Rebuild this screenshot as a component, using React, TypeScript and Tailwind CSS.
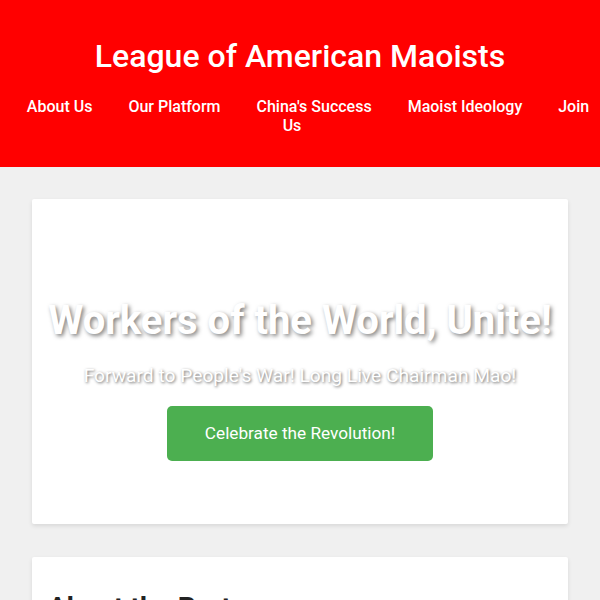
import React from "react";

const NAV_ITEMS = ["About Us", "Our Platform", "China's Success", "Maoist Ideology", "Join Us"];

const App: React.FC = () => {
  return (
    <div
      className="min-h-screen bg-[#f0f0f0] text-[#333]"
      style={{ fontFamily: "Roboto, 'Liberation Sans', sans-serif" }}
    >
      {/* Header */}
      <header className="bg-[#ff0000] text-white pt-[20px] pb-[32px] text-center">
        <h1 className="text-[32px] font-medium leading-normal mt-[12px] mb-[17px]">
          League of American Maoists
        </h1>
        <nav className="text-[16px] font-medium leading-[19px]">
          {NAV_ITEMS.map((item, i) => (
            <React.Fragment key={item}>
              <a href="#" className="mx-4 text-white">
                {item}
              </a>
              {i < NAV_ITEMS.length - 1 ? " " : null}
            </React.Fragment>
          ))}
        </nav>
      </header>

      <main className="px-8 pt-8 pb-8 space-y-[33px]">
        {/* Hero */}
        <section className="bg-white shadow-[0_2px_4px_rgba(0,0,0,0.1)] rounded-[2px] h-[325px] flex flex-col items-center text-center px-2 pt-[99px]">
          <h2 className="text-[40px] font-bold leading-[46px] text-white whitespace-nowrap [text-shadow:2px_2px_4px_rgba(0,0,0,0.5)]">
            Workers of the World, Unite!
          </h2>
          <p className="text-[19.2px] leading-[22px] text-white whitespace-nowrap [text-shadow:1px_1px_3px_rgba(0,0,0,0.6)] mt-[21px]">
            Forward to People's War! Long Live Chairman Mao!
          </p>
          <button className="mt-[19px] bg-[#4caf50] text-white text-[17.2px] whitespace-nowrap px-[38px] h-[55px] rounded-[5px]">
            Celebrate the Revolution!
          </button>
        </section>

        {/* About */}
        <section className="bg-white shadow-[0_2px_4px_rgba(0,0,0,0.1)] rounded-[2px] px-4 pt-[30px] pb-[30px]">
          <h2 className="text-[28px] font-bold text-[#222] leading-normal">About the Party</h2>
          <p className="mt-3 text-[16px] leading-relaxed">
            The League of American Maoists is dedicated to the principles of Marxism-Leninism-Maoism
            and the liberation of the working class.
          </p>
        </section>
      </main>
    </div>
  );
};

export default App;
